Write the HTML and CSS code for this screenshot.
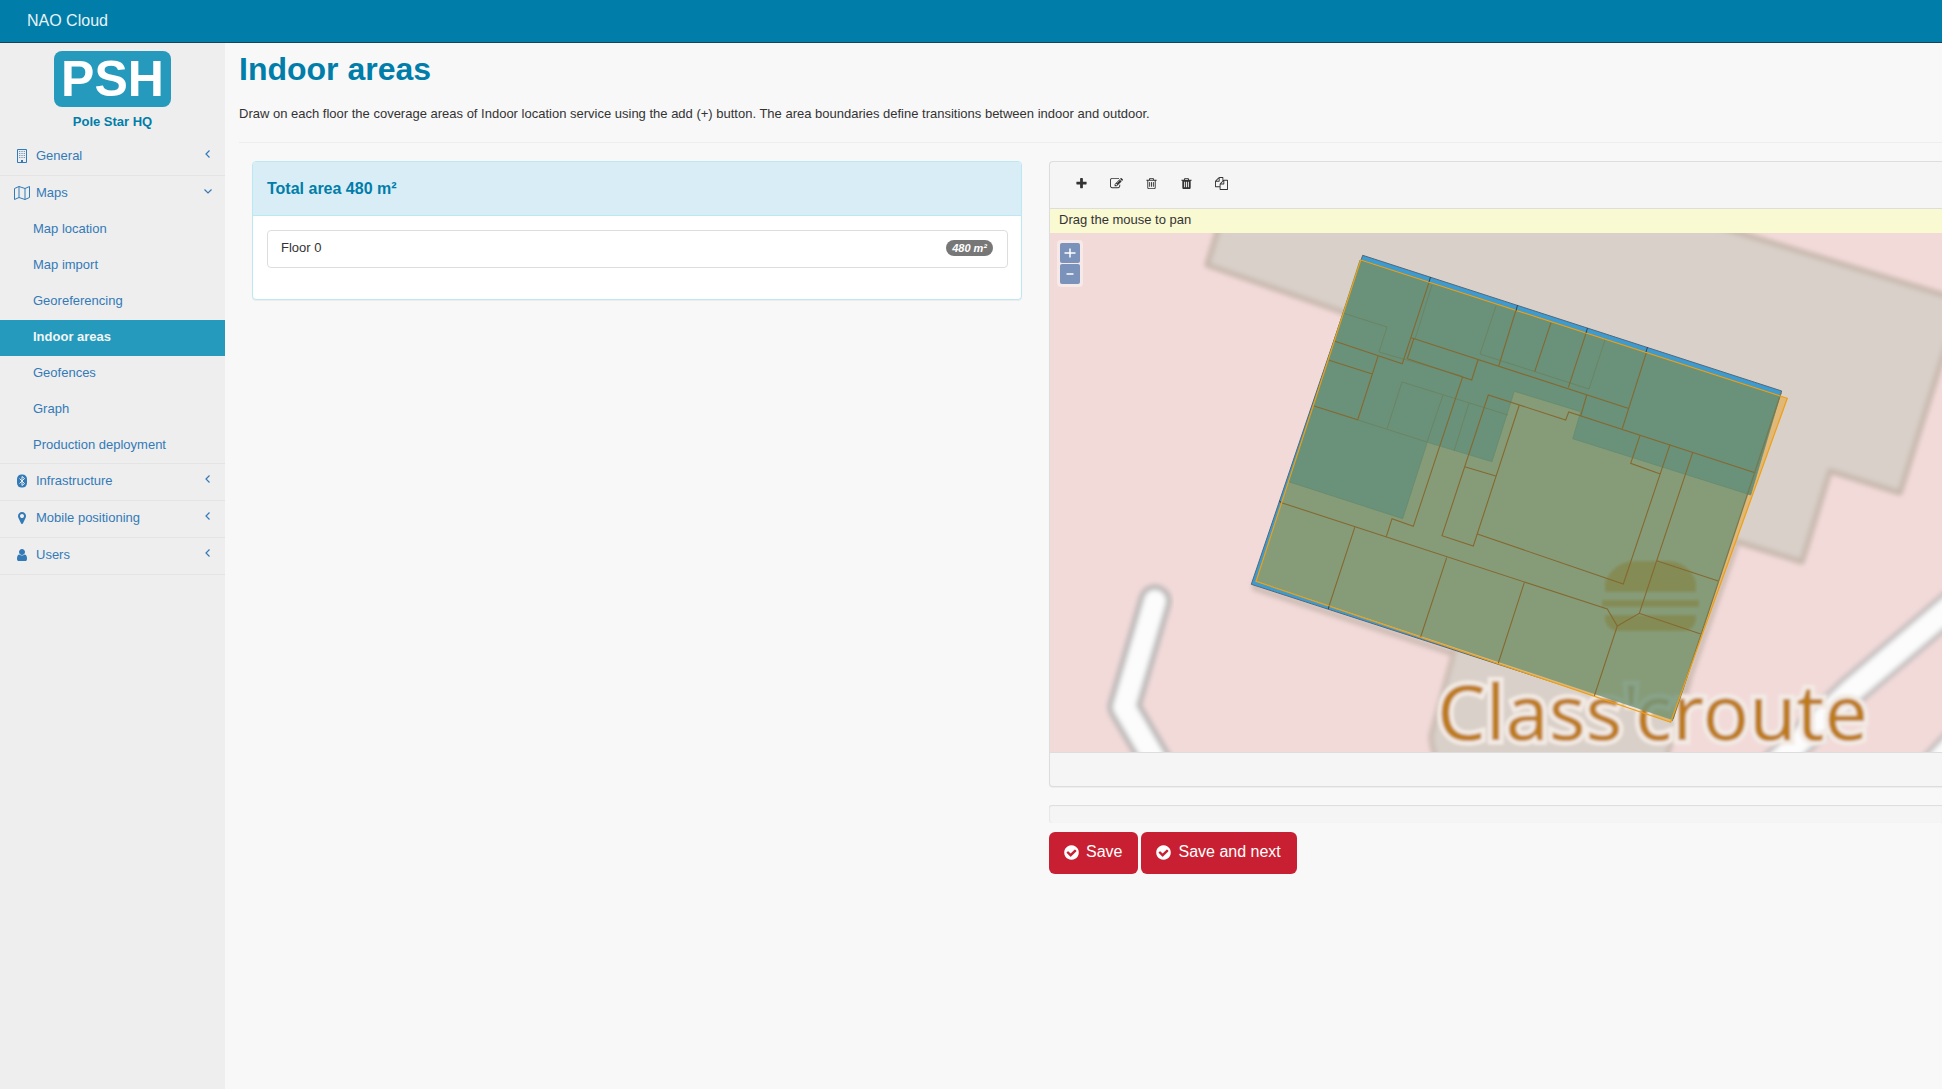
FILE: index.html
```html
<!DOCTYPE html>
<html lang="en">
<head>
<meta charset="utf-8">
<title>NAO Cloud - Indoor areas</title>
<link rel="stylesheet" href="styles.css">
</head>
<body>
<header class="navbar"><a class="brand" href="#">NAO Cloud</a></header>
<div class="layout">
  <aside class="sidebar">
    <div class="site">
      <div class="site-logo">PSH</div>
      <div class="site-name">Pole Star HQ</div>
    </div>
    <nav>
      <ul class="menu">
        <li class="menu-group"><a class="menu-link" href="#">
          <svg class="menu-icon" viewBox="0 0 18 14"><path d="M4.500.5h9v13h-9z" fill="none" stroke="currentColor"/><path d="M6 2.500h6M6 4.500h6M6 6.500h6M6 8.500h6" stroke="currentColor" stroke-dasharray="1 .67" opacity=".7"/><path d="M8 11h2v2.500H8z" fill="currentColor"/></svg>
          <span>General</span><svg class="caret" viewBox="0 0 8 8"><path d="M5.500 .5 2 4l3.500 3.500"/></svg></a></li>
        <li class="menu-group"><a class="menu-link" href="#">
          <svg class="menu-icon" viewBox="0 0 18 14"><path d="M1.500 2.500l4.500-2 6 2 4.500-2v11l-4.500 2-6-2-4.500 2zM6 .5v11M12 2.500v11" fill="none" stroke="currentColor"/></svg>
          <span>Maps</span><svg class="caret" viewBox="0 0 8 8"><path d="M.5 2.500 4 6l3.500-3.500"/></svg></a>
          <ul class="submenu">
            <li><a href="#">Map location</a></li>
            <li><a href="#">Map import</a></li>
            <li><a href="#">Georeferencing</a></li>
            <li><a class="active" href="#">Indoor areas</a></li>
            <li><a href="#">Geofences</a></li>
            <li><a href="#">Graph</a></li>
            <li><a href="#">Production deployment</a></li>
          </ul></li>
        <li class="menu-group"><a class="menu-link" href="#">
          <svg class="menu-icon" viewBox="0 0 18 14"><rect x="4" y="0.500" width="10" height="13" rx="4.500" fill="currentColor"/><path d="M6.500 4.500l5 5L9 11.500v-9l2.500 2-5 5" fill="none" stroke="#eee"/></svg>
          <span>Infrastructure</span><svg class="caret" viewBox="0 0 8 8"><path d="M5.500 .5 2 4l3.500 3.500"/></svg></a></li>
        <li class="menu-group"><a class="menu-link" href="#">
          <svg class="menu-icon" viewBox="-256 0 2304 1792"><path fill="currentColor" d="M1152 640q0-106-75-181t-181-75-181 75-75 181 75 181 181 75 181-75 75-181zm256 0q0 109-33 179l-364 774q-16 33-47.500 52t-67.500 19-67.500-19-46.500-52l-365-774q-33-70-33-179 0-212 150-362t362-150 362 150 150 362z"/></svg>
          <span>Mobile positioning</span><svg class="caret" viewBox="0 0 8 8"><path d="M5.500 .5 2 4l3.500 3.500"/></svg></a></li>
        <li class="menu-group"><a class="menu-link" href="#">
          <svg class="menu-icon" viewBox="-256 0 2304 1792"><path fill="currentColor" d="M1536 1399q0 109-62.500 187t-150.500 78h-854q-88 0-150.500-78t-62.500-187q0-85 8.500-160.500t31.500-152 58.500-131 94-89 134.500-34.500q131 128 313 128t313-128q76 0 134.500 34.500t94 89 58.500 131 31.500 152 8.500 160.500zm-256-887q0 159-112.500 271.500t-271.500 112.500-271.500-112.500-112.500-271.500 112.500-271.500 271.500-112.500 271.500 112.500 112.500 271.500z"/></svg>
          <span>Users</span><svg class="caret" viewBox="0 0 8 8"><path d="M5.500 .5 2 4l3.500 3.500"/></svg></a></li>
      </ul>
    </nav>
  </aside>
  <main class="content">
    <h1>Indoor areas</h1>
    <p class="lead">Draw on each floor the coverage areas of Indoor location service using the add (+) button. The area boundaries define transitions between indoor and outdoor.</p>
    <div class="columns">
      <section class="panel">
        <h2 class="panel-title">Total area 480 m²</h2>
        <div class="panel-body">
          <ul class="floors"><li><span>Floor 0</span><em class="badge">480 m²</em></li></ul>
        </div>
      </section>
      <section>
        <div class="map-panel">
          <div class="toolbar">
            <button type="button" aria-label="Add"><svg viewBox="0 0 1792 1792"><path d="M1600 736v192q0 40-28 68t-68 28h-416v416q0 40-28 68t-68 28h-192q-40 0-68-28t-28-68v-416h-416q-40 0-68-28t-28-68v-192q0-40 28-68t68-28h416v-416q0-40 28-68t68-28h192q40 0 68 28t28 68v416h416q40 0 68 28t28 68z"/></svg></button>
            <button type="button" aria-label="Edit"><svg viewBox="0 0 1792 1792"><path d="M888 1184l116-116-152-152-116 116v56h96v96h56zm440-720q-16-16-33 1l-350 350q-17 17-1 33t33-1l350-350q17-17 1-33zm80 594v190q0 119-84.500 203.500t-203.500 84.500h-832q-119 0-203.500-84.500t-84.500-203.500v-832q0-119 84.500-203.500t203.500-84.500h832q63 0 117 25 15 7 18 23 3 17-9 29l-49 49q-14 14-32 8-23-6-45-6h-832q-66 0-113 47t-47 113v832q0 66 47 113t113 47h832q66 0 113-47t47-113v-126q0-13 9-22l64-64q15-15 35-7t20 29zm-96-738l288 288-672 672h-288v-288zm444 132l-92 92-288-288 92-92q28-28 68-28t68 28l152 152q28 28 28 68t-28 68z"/></svg></button>
            <button type="button" aria-label="Delete"><svg viewBox="0 0 1792 1792"><path d="M704 736v576q0 14-9 23t-23 9h-64q-14 0-23-9t-9-23v-576q0-14 9-23t23-9h64q14 0 23 9t9 23zm256 0v576q0 14-9 23t-23 9h-64q-14 0-23-9t-9-23v-576q0-14 9-23t23-9h64q14 0 23 9t9 23zm256 0v576q0 14-9 23t-23 9h-64q-14 0-23-9t-9-23v-576q0-14 9-23t23-9h64q14 0 23 9t9 23zm128 724v-948h-896v948q0 22 7 40.500t14.500 27 10.500 8.500h832q3 0 10.500-8.500t14.500-27 7-40.500zm-672-1076h448l-48-117q-7-9-17-11h-317q-10 2-17 11zm928 32v64q0 14-9 23t-23 9h-96v948q0 83-47 143.500t-113 60.500h-832q-66 0-113-58.500t-47-141.500v-952h-96q-14 0-23-9t-9-23v-64q0-14 9-23t23-9h309l70-167q15-37 54-63t79-26h320q40 0 79 26t54 63l70 167h309q14 0 23 9t9 23z"/></svg></button>
            <button type="button" aria-label="Delete all"><svg viewBox="0 0 1792 1792"><path d="M704 1376v-704q0-14-9-23t-23-9h-64q-14 0-23 9t-9 23v704q0 14 9 23t23 9h64q14 0 23-9t9-23zm256 0v-704q0-14-9-23t-23-9h-64q-14 0-23 9t-9 23v704q0 14 9 23t23 9h64q14 0 23-9t9-23zm256 0v-704q0-14-9-23t-23-9h-64q-14 0-23 9t-9 23v704q0 14 9 23t23 9h64q14 0 23-9t9-23zm-544-992h448l-48-117q-7-9-17-11h-317q-10 2-17 11zm928 32v64q0 14-9 23t-23 9h-96v948q0 83-47 143.500t-113 60.500h-832q-66 0-113-58.500t-47-141.500v-952h-96q-14 0-23-9t-9-23v-64q0-14 9-23t23-9h309l70-167q15-37 54-63t79-26h320q40 0 79 26t54 63l70 167h309q14 0 23 9t9 23z"/></svg></button>
            <button type="button" aria-label="Copy"><svg viewBox="0 0 1792 1792"><path d="M1696 384q40 0 68 28t28 68v1216q0 40-28 68t-68 28h-960q-40 0-68-28t-28-68v-288h-544q-40 0-68-28t-28-68v-672q0-40 20-88t48-76l408-408q28-28 76-48t88-20h416q40 0 68 28t28 68v328q68-40 128-40h416zm-544 213l-299 299h299v-299zm-640-384l-299 299h299v-299zm196 647l316-316v-416h-384v416q0 40-28 68t-68 28h-416v640h512v-256q0-40 20-88t48-76zm956 804v-1152h-384v416q0 40-28 68t-68 28h-416v640h896z"/></svg></button>
          </div>
          <p class="hint">Drag the mouse to pan</p>
          <div class="map">
            <svg class="map-canvas" viewBox="1050 233 892 519" preserveAspectRatio="xMinYMin slice" role="img" aria-label="Floor plan">
              <defs>
                <filter id="tile" filterUnits="userSpaceOnUse" x="1000" y="180" width="1000" height="640"><feGaussianBlur stdDeviation="2.500"/></filter>
                <filter id="label" filterUnits="userSpaceOnUse" x="1400" y="500" width="520" height="300"><feGaussianBlur stdDeviation="1.800"/></filter>
                <clipPath id="west"><path d="M1050 233h124v520h-124z"/></clipPath>
              </defs>
              <g filter="url(#tile)" stroke-linejoin="round">
                <path d="M1224 210L1207 265 1342 312 1500 400 1700 530 1738 542 1802 562 1830 471 1900 493 1945 350 1960 300 1740 233 1680 214z" fill="#d9d0c9" stroke="#c4b5aa" stroke-width="5"/>
                <path d="M1460 630L1431 735Q1430 745 1440 770H1663L1690 680z" fill="#d9d0c9" stroke="#c4b5aa" stroke-width="4"/>
                <path d="M1256 580L1255 588 1455 654M1736 545L1676 715" fill="none" stroke="#cbb9b0" stroke-width="6"/>
                <g fill="none" stroke-linecap="round">
                  <g stroke="#bdb9b9" stroke-width="32"><path d="M1970 590L1850 692 1775 765M1970 728L1935 765"/></g>
                  <g stroke="#fcfcfc" stroke-width="23"><path d="M1970 590L1850 692 1775 765M1970 728L1935 765"/></g>
                </g>
              </g>
              <g clip-path="url(#west)"><g filter="url(#tile)" fill="none" stroke-linecap="round" stroke-linejoin="round">
                <path d="M1155 601L1124 707 1158 765" stroke="#b9b6b6" stroke-width="33"/>
                <path d="M1155 601L1124 707 1158 765" stroke="#fcfcfc" stroke-width="22"/>
              </g></g>
              <path d="M1362.700 255.300L1781.700 391 1672.300 720.700 1251.300 584.300z" fill="#3d9bcf" stroke="#52687a"/>
              <path d="M1360.700 260L1787.300 398.300 1670.700 722.300 1256 581.300z" fill="#e2b878"/>
              <text class="map-label" x="1437" y="740" filter="url(#label)">Class'croute</text>
              <path d="M1360.700 260L1780 396 1672.300 720 1256 581.300z" fill="#769779" fill-opacity=".85"/>
              <path d="M1360 260L1780 396 1750.700 495 1572.700 438.700 1580.700 411.700 1514.300 391.300 1492 461.700 1427.300 442.300 1402.700 518.700 1288.700 481.700z" fill="#6a917a" stroke="#64896c" stroke-width=".7"/>
              <g fill="#848b54" filter="url(#label)"><path d="M1605 592v-10q9-21 32-21h28q24 0 31 21v10zM1602 600h97v7h-97zM1605 615h91v5q-3 11-12 11h-66q-10 0-13-11z"/></g>
              <g fill="none" stroke="#6b7f55" stroke-opacity=".7">
                <path d="M1343 313L1387 327 1379 352 1462 376M1432 285L1415 339M1496 306L1480 354 1589 389 1605 340M1387 429L1402 382 1508 415M1358 420L1427 442 1443 395M1469 403L1454 451"/>
              </g>
              <g fill="none" stroke="#85692f" stroke-width="1.100">
                <path d="M1429 282.300L1402.300 363.700 1334.300 341M1411.300 337.700L1628 408.300M1413.700 339L1407.300 358.700 1471.700 380 1478 360M1378 356.300L1357.700 419.700 1314 406M1328.300 360L1372.300 374M1515.700 311L1498.700 366M1551 322.700L1534.700 371.700M1586 333.300L1568.300 387.700"/>
                <path d="M1462.700 376.700L1413.300 526.300 1392 518.700 1386.300 536.700M1519.300 405L1473.300 546 1442 535.700 1488.300 395 1565.700 420 1568.700 412 1755 472.700M1464.700 466.700L1495.700 476M1279.300 502L1607.300 609 1617.300 626 1639.300 613.300 1700.700 634M1355 526.700L1328.700 607M1446.700 557.700L1420.300 638M1524.300 582.700L1498 664M1617.300 626L1594.300 696"/>
                <path d="M1639.300 613.300L1656.700 560.700 1692.700 452.300M1656.700 560.700L1718.300 581M1477.300 534L1623.300 584 1670 444.700M1640 435.300L1630.700 463.300 1660.300 474M1646.700 351.700L1622.300 428.700M1586.700 395L1580.700 416"/>
              </g>
              <path d="M1781 393L1673 719" fill="none" stroke="#77794f" stroke-width="1.300"/>
              <path d="M1360.700 260L1787.300 398.300 1670.700 722.300 1256 581.300z" fill="none" stroke="#ee9f14" stroke-width="1.200"/>
              <path d="M1430.500 277l-1.500 5M1517.500 305l-1.500 6M1587.500 328l-1.500 5M1647.500 347l-1.500 5M1279 501l2 1M1329 606l-.7 3" stroke="#2e4653" fill="none"/>
            </svg>
            <div class="zoom"><button type="button" aria-label="Zoom in"><svg viewBox="0 0 12 12"><path d="M.5 6h11M6 1.500v9"/></svg></button><button type="button" aria-label="Zoom out"><svg viewBox="0 0 12 12"><path d="M2.500 6h7"/></svg></button></div>
          </div>
          <div class="map-footer"></div>
        </div>
        <div class="well"></div>
        <div class="actions">
          <button type="button"><svg viewBox="0 0 1792 1792"><path d="M1412 734q0-28-18-46l-91-90q-19-19-45-19t-45 19l-408 407-226-226q-19-19-45-19t-45 19l-91 90q-18 18-18 46 0 27 18 45l362 362q19 19 45 19 27 0 46-19l543-543q18-18 18-45zm252 162q0 209-103 385.500t-279.500 279.500-385.500 103-385.500-103-279.500-279.500-103-385.500 103-385.500 279.500-279.500 385.500-103 385.500 103 279.500 279.500 103 385.500z"/></svg>Save</button>
          <button type="button"><svg viewBox="0 0 1792 1792"><path d="M1412 734q0-28-18-46l-91-90q-19-19-45-19t-45 19l-408 407-226-226q-19-19-45-19t-45 19l-91 90q-18 18-18 46 0 27 18 45l362 362q19 19 45 19 27 0 46-19l543-543q18-18 18-45zm252 162q0 209-103 385.500t-279.500 279.500-385.500 103-385.500-103-279.500-279.500-103-385.500 103-385.500 279.500-279.500 385.500-103 385.500 103 279.500 279.500 103 385.500z"/></svg>Save and next</button>
        </div>
      </section>
    </div>
  </main>
</div>
</body>
</html>
```
FILE: styles.css
```css
* { box-sizing: border-box; }
body {
  margin: 0;
  min-height: 100vh;
  display: flex;
  flex-direction: column;
  background: #f8f8f8;
  color: #333;
  font: 13px/18px "Liberation Sans", Arial, sans-serif;
}
ul { list-style: none; margin: 0; padding: 0; }
a { color: #337ab7; text-decoration: none; }
button { font: inherit; cursor: pointer; }

.navbar {
  display: flex;
  padding: 11px 27px;
  background: #007da9;
  border-bottom: 1px solid #14445a;
}
.brand { color: #e8f3f7; font-size: 16px; line-height: 20px; }

.layout { flex: 1; display: flex; }
.sidebar {
  width: 225px;
  flex: none;
  background: #eee;
}
.site {
  display: flex;
  flex-direction: column;
  align-items: center;
  padding: 8px 0;
}
.site-logo {
  width: 117px;
  border-radius: 8px;
  background: #269abc;
  color: #fff;
  font-size: 50px;
  font-weight: bold;
  line-height: 56px;
  text-align: center;
}
.site-name { padding-top: 6px; color: #007da9; font-weight: bold; }

.menu-group { border-bottom: 1px solid #e4e4e4; }
.menu-link {
  display: flex;
  align-items: center;
  gap: 5px;
  padding: 8px 13px 10px;
}
.menu-icon { width: 18px; height: 14px; }
.caret {
  width: 8px;
  height: 8px;
  margin: 0 0 4px auto;
  fill: none;
  stroke: currentColor;
  stroke-width: 1.2;
}
.submenu { margin-bottom: -1px; }
.submenu a { display: block; padding: 8px 15px 10px 33px; }
.submenu .active { background: #269abc; color: #f0f5f5; font-weight: bold; }

.content { flex: 1; min-width: 0; padding-left: 14px; }
h1 {
  margin: 0;
  padding: 7px 0;
  color: #007da9;
  font-size: 32px;
  line-height: 38px;
}
.lead {
  margin: 0 0 18px;
  padding: 10px 0 19px;
  border-bottom: 1px solid #eee;
}
.columns {
  display: grid;
  grid-template-columns: minmax(0, 770fr) minmax(0, 893fr);
  gap: 27px;
  align-items: start;
  padding-left: 13px;
}
.panel {
  overflow: hidden;
  background: #fff;
  border: 1px solid #bce8f1;
  border-radius: 4px;
  box-shadow: 0 1px 1px rgba(0, 0, 0, .05);
}
.panel-title {
  margin: 0;
  padding: 17px 14px 16px;
  background: #d9edf7;
  border-bottom: 1px solid #bce8f1;
  color: #007da9;
  font-size: 16px;
  line-height: 20px;
}
.panel-body { padding: 14px 13px 31px 14px; }
.floors li {
  display: flex;
  align-items: center;
  justify-content: space-between;
  padding: 8px 14px 10px 13px;
  border: 1px solid #ddd;
  border-radius: 4px;
}
.badge {
  padding: 0 6px;
  border-radius: 8px;
  background: #777;
  color: #fff;
  font-size: 11px;
  font-weight: bold;
  line-height: 16px;
}

.map-panel {
  overflow: hidden;
  background: #f5f5f5;
  border: 1px solid #ddd;
  border-right: 0;
  border-radius: 4px 0 0 4px;
  box-shadow: 0 1px 1px rgba(0, 0, 0, .05);
}
.toolbar {
  display: flex;
  padding: 11px 14px 14px;
  border-bottom: 1px solid #ddd;
}
.toolbar button {
  display: flex;
  align-items: center;
  justify-content: center;
  width: 35px;
  height: 21px;
  padding: 0;
  border: 0;
  background: none;
}
.toolbar svg { width: 13px; height: 13px; fill: #333; }
.hint { margin: 0; padding: 2px 9px 4px; background: #f9f9d2; }
.map { position: relative; height: 519px; overflow: hidden; background: #f2dad9; }
.map-canvas { display: block; width: 100%; height: 100%; }
.map-label {
  font-family: "Noto Sans", sans-serif;
  font-size: 77px;
  fill: #bd7a14;
  stroke: #f3ebe5;
  stroke-width: 9px;
  paint-order: stroke;
}
.zoom {
  position: absolute;
  left: 7px;
  top: 7px;
  display: flex;
  flex-direction: column;
  gap: 1px;
  padding: 3px;
  border-radius: 4px;
  background: rgba(255, 255, 255, .4);
}
.zoom button {
  display: flex;
  align-items: center;
  justify-content: center;
  width: 20px;
  height: 20px;
  padding: 0;
  border: 0;
  border-radius: 2px;
  background: #7b93ba;
}
.zoom svg { width: 12px; height: 12px; stroke: #fff; stroke-width: 1.5; }
.map-footer { height: 34px; border-top: 1px solid #ddd; }
.well {
  height: 18px;
  margin: 18px 0 9px;
  border-radius: 3px 0 0 3px;
  background: #f5f5f5;
  box-shadow: inset 0 1px 1px #ddd, inset 1px 0 1px #e8e8e8;
}
.actions { display: flex; gap: 3px; }
.actions button {
  display: flex;
  align-items: center;
  gap: 6px;
  padding: 10px 16px 12px 14px;
  border: 0;
  border-radius: 6px;
  background: #c82032;
  color: #fff;
  font-size: 16px;
  line-height: 20px;
}
.actions svg { width: 17px; height: 17px; fill: #fff; }
```
